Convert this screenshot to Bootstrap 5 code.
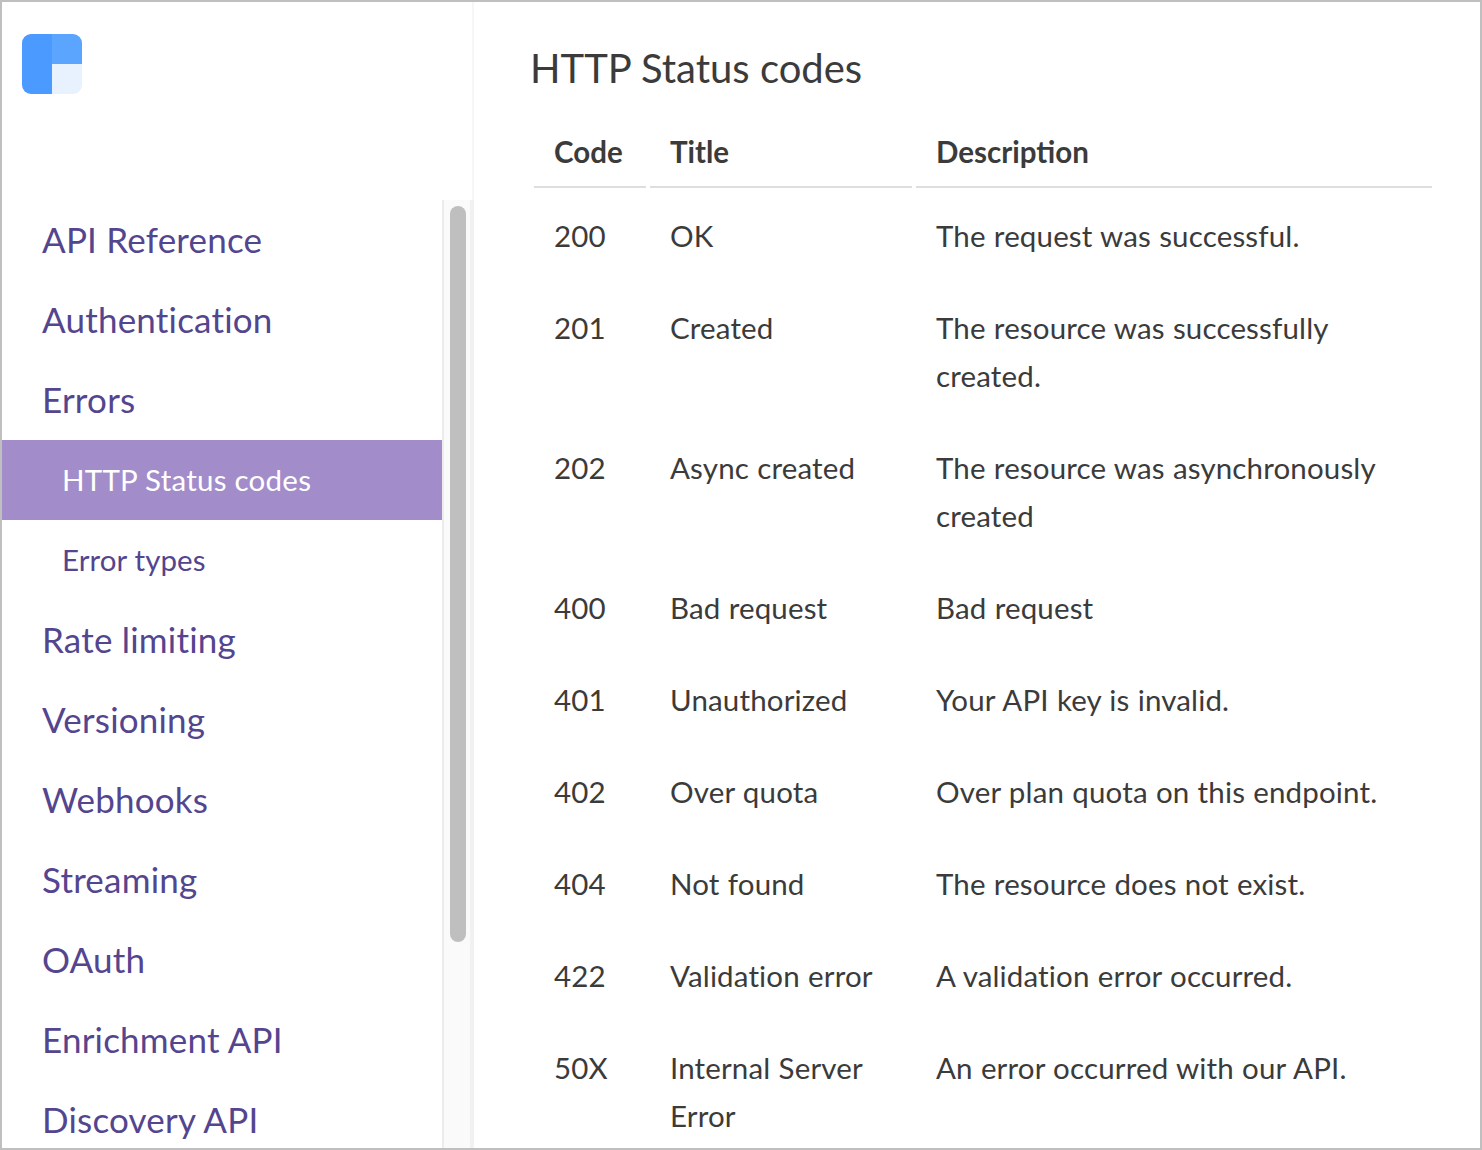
<!doctype html>
<html lang="en"><head><meta charset="utf-8">
<link href="https://cdn.jsdelivr.net/npm/bootstrap@5.3.0/dist/css/bootstrap.min.css" rel="stylesheet">
<style>
html,body{height:100%;overflow:hidden;background:#fff}
body{font-family:"Lato","Open Sans",sans-serif;color:#3b3b3b}
.frame{height:1150px;border:2px solid #bfbfbf}
.side{width:472px;flex:none}
.brand{height:198px;padding:32px 0 0 20px;border-right:2px solid #f6f6f6}
.navwrap{height:948px;overflow:hidden}
.navlist{width:440px;flex:none}
.navlist a{display:block;height:80px;line-height:78px;padding-left:40px;font-size:35px;letter-spacing:.2px;color:#54458f;text-decoration:none;white-space:nowrap}
.navlist a.sub{padding-left:60px;font-size:29.5px;line-height:80px;letter-spacing:.1px}
.navlist a.on{background:#a28dca;color:#fff;letter-spacing:.25px}
.track{width:32px;flex:none;background:#fafafa;border-left:2px solid #ececec;border-right:4px solid #f1f1f1;padding:6px 0 0 6px}
.thumb{width:16px;height:736px;border-radius:8px;background:#bfbfbf}
.pane{padding:0 0 0 56px;min-width:0}
.pagetitle{font-size:40px;font-weight:400;line-height:48px;margin:42px 0 0;color:#3b3b3b}
.apitable{width:906px;table-layout:fixed;border-collapse:separate;border-spacing:4px 0;margin:26px 0 0 0}
.apitable th{font-size:29.5px;font-weight:700;line-height:44px;padding:12px 20px;border-bottom:2px solid #dedede;color:#3b3b3b}
.apitable td{font-size:29.5px;line-height:48px;padding:24px 20px 20px;vertical-align:top;color:#3b3b3b;border:0;letter-spacing:.15px;word-spacing:.5px}
.c1{width:112px}.c2{width:262px}
</style></head>
<body>
<div class="frame d-flex">
  <aside class="side d-flex flex-column">
    <div class="brand">
      <svg width="60" height="60" viewBox="0 0 60 60" role="img" aria-label="Logo"><defs><clipPath id="lc"><rect width="60" height="60" rx="9"/></clipPath></defs><g clip-path="url(#lc)"><rect width="30" height="60" fill="#4a9aff"/><rect x="30" width="30" height="30" fill="#5ca5ff"/><rect x="30" y="30" width="30" height="30" fill="#e8f2ff"/></g></svg>
    </div>
    <div class="navwrap d-flex">
      <nav class="navlist">
        <a href="#">API Reference</a>
        <a href="#">Authentication</a>
        <a href="#">Errors</a>
        <a href="#" class="sub on">HTTP Status codes</a>
        <a href="#" class="sub">Error types</a>
        <a href="#">Rate limiting</a>
        <a href="#">Versioning</a>
        <a href="#">Webhooks</a>
        <a href="#">Streaming</a>
        <a href="#">OAuth</a>
        <a href="#">Enrichment API</a>
        <a href="#">Discovery API</a>
      </nav>
      <div class="track"><div class="thumb"></div></div>
    </div>
  </aside>
  <main class="pane flex-grow-1">
    <h1 class="pagetitle">HTTP Status codes</h1>
    <table class="apitable">
      <colgroup><col class="c1"><col class="c2"><col></colgroup>
      <thead><tr><th>Code</th><th>Title</th><th>Description</th></tr></thead>
      <tbody>
        <tr><td>200</td><td>OK</td><td>The request was successful.</td></tr>
        <tr><td>201</td><td>Created</td><td>The resource was successfully created.</td></tr>
        <tr><td>202</td><td>Async created</td><td>The resource was asynchronously created</td></tr>
        <tr><td>400</td><td>Bad request</td><td>Bad request</td></tr>
        <tr><td>401</td><td>Unauthorized</td><td>Your API key is invalid.</td></tr>
        <tr><td>402</td><td>Over quota</td><td>Over plan quota on this endpoint.</td></tr>
        <tr><td>404</td><td>Not found</td><td>The resource does not exist.</td></tr>
        <tr><td>422</td><td>Validation error</td><td>A validation error occurred.</td></tr>
        <tr><td>50X</td><td>Internal Server Error</td><td>An error occurred with our API.</td></tr>
      </tbody>
    </table>
  </main>
</div>
<script src="https://cdn.jsdelivr.net/npm/bootstrap@5.3.0/dist/js/bootstrap.bundle.min.js"></script>
</body></html>
